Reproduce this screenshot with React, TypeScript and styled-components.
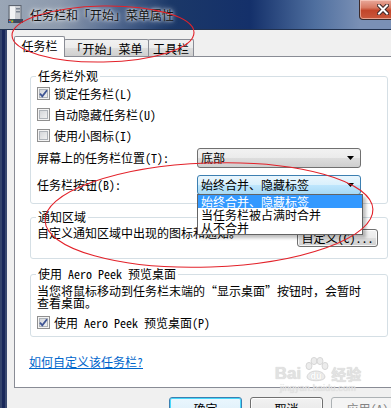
import React from "react";
import styled, { createGlobalStyle, css } from "styled-components";

const uiFont = `"Noto Sans Mono CJK SC", "Noto Sans CJK SC", "Liberation Sans", sans-serif`;

const GlobalStyle = createGlobalStyle`
  html, body {
    margin: 0;
    padding: 0;
    background: #f0f0f0;
    overflow: hidden;
  }
  body {
    font-family: ${uiFont};
    font-size: 12px;
    color: #000;
  }
  * { box-sizing: border-box; }
`;

const Window = styled.div`
  position: relative;
  width: 408px;
  height: 408px;
  display: flex;
  flex-direction: column;
`;

const TitleBar = styled.div`
  height: 30px;
  flex: none;
  display: flex;
  align-items: center;
  padding-left: 8px;
  border-bottom: 1px solid #22324f;
  background: linear-gradient(
    90deg,
    #9aa6b6 0,
    #8d9aad 60px,
    #51688f 115px,
    #1b3868 170px,
    #14306a 250px,
    #4f6f9f 315px,
    #7a90b5 360px
  );
`;

const Title = styled.span`
  margin-left: 7px;
  margin-top: -1px;
  font-size: 12px;
  color: #111;
  text-shadow: 0 0 6px #fff, 0 0 3px rgba(255, 255, 255, 0.9);
`;

const CloseButton = styled.div`
  margin-left: auto;
  align-self: flex-start;
  width: 49px;
  height: 20px;
  display: flex;
  align-items: center;
  justify-content: center;
  padding-right: 1px;
  border: 1px solid #3b2a2a;
  border-top: none;
  border-radius: 0 0 0 4px;
  background: linear-gradient(
    180deg,
    #e9a99b 0,
    #d87a63 40%,
    #c2452a 55%,
    #c9583c 100%
  );
  box-shadow: inset 0 0 0 1px rgba(255, 220, 210, 0.55);
`;

const Body = styled.div`
  flex: 1;
  display: flex;
  min-height: 0;
`;

const Frame = styled.div`
  width: 7px;
  flex: none;
  background: linear-gradient(
    90deg,
    #34446c 0 2px,
    #19285a 2px 5px,
    #3b4a70 5px 7px
  );
`;

const Content = styled.div`
  flex: 1;
  padding: 6px 8px 0 7px;
  background: #f0f0f0;
  display: flex;
  flex-direction: column;
`;

const TabStrip = styled.div`
  position: relative;
  z-index: 1;
  height: 21px;
  margin-bottom: -1px;
  display: flex;
  align-items: flex-start;
`;

const Tab = styled.div<{ $w: number; $active?: boolean }>`
  width: ${({ $w }) => $w}px;
  display: flex;
  justify-content: center;
  border: 1px solid #898c95;
  border-bottom: none;
  border-radius: 2px 2px 0 0;
  margin-right: -1px;
  ${({ $active }) =>
    $active
      ? css`
          height: 21px;
          padding-top: 2px;
          background: #fff;
          position: relative;
          z-index: 2;
        `
      : css`
          height: 17px;
          margin-top: 3px;
          padding-top: 2px;
          background: linear-gradient(180deg, #f2f2f2 0, #ebebeb 50%, #dddddd 51%, #cfcfcf 100%);
        `}
  line-height: 14px;
`;

const Panel = styled.div`
  height: 332px;
  flex: none;
  background: #fff;
  border: 1px solid #898c95;
  padding: 12px 15px 0 15px;
  display: flex;
  flex-direction: column;
`;

const Group = styled.fieldset<{ $gap?: number }>`
  margin: ${({ $gap }) => $gap ?? 0}px 0 0 0;
  min-inline-size: 0;
  border: 1px solid #d5dfe5;
  border-radius: 3px;
  padding: 0 26px 8px 6px;
`;

const Legend = styled.legend`
  padding: 0 2px;
  margin-left: -1px;
  line-height: 14px;
  font-size: 12px;
`;

const CheckRow = styled.label<{ $top?: number }>`
  height: 21px;
  margin-top: ${({ $top }) => $top ?? 0}px;
  display: flex;
  align-items: center;
  gap: 4px;
  line-height: 14px;
`;

const Box = styled.span`
  width: 13px;
  height: 13px;
  flex: none;
  border: 1px solid #8f8f8f;
  background: linear-gradient(135deg, #cdd0d4 0, #f7f7f7 100%);
  box-shadow: inset 0 0 0 1px #f4f4f4, inset 0 0 0 2px #aeb3b9;
  display: flex;
  align-items: center;
  justify-content: center;
`;

const ComboRow = styled.div<{ $top: number }>`
  height: 20px;
  margin-top: ${({ $top }) => $top}px;
  display: flex;
  align-items: center;
  justify-content: space-between;
  line-height: 14px;
`;

const Combo = styled.div<{ $focus?: boolean }>`
  position: relative;
  width: 164px;
  height: 20px;
  display: flex;
  align-items: center;
  padding: 0 6px 0 3px;
  border-radius: 3px;
  ${({ $focus }) =>
    $focus
      ? css`
          border: 1px solid #3c7fb1;
          background: linear-gradient(180deg, #eaf6fd 0, #d9f0fc 50%, #bee6fd 51%, #a7d9f5 100%);
        `
      : css`
          border: 1px solid #707070;
          background: linear-gradient(180deg, #f2f2f2 0, #ebebeb 50%, #dddddd 51%, #cfcfcf 100%);
        `}
`;

const ComboText = styled.span`
  flex: 1;
  line-height: 14px;
`;

const DropList = styled.div`
  position: absolute;
  left: -1px;
  top: 18px;
  width: 166px;
  background: #fff;
  border: 1px solid #646464;
  box-shadow: 3px 3px 3px rgba(0, 0, 0, 0.25);
  z-index: 5;
`;

const DropItem = styled.div<{ $selected?: boolean }>`
  height: 13px;
  line-height: 13px;
  padding-left: 3px;
  white-space: nowrap;
  ${({ $selected }) =>
    $selected &&
    css`
      background: #3399ff;
      color: #fff;
    `}
`;

const NotifyRow = styled.div`
  display: flex;
  align-items: flex-start;
  margin-right: -17px;
`;

const Text = styled.div<{ $top?: number }>`
  margin-top: ${({ $top }) => $top ?? 0}px;
  line-height: 14px;
  white-space: nowrap;
`;

const Paragraph = styled.div`
  margin-top: 4px;
  line-height: 12px;
  white-space: nowrap;
`;

const Button = styled.div<{ $w?: number; $h?: number; $kind?: "default" | "disabled" }>`
  width: ${({ $w }) => $w ?? 73}px;
  height: ${({ $h }) => $h ?? 23}px;
  flex: none;
  display: flex;
  align-items: center;
  justify-content: center;
  border-radius: 3px;
  line-height: 14px;
  border: 1px solid #707070;
  background: linear-gradient(180deg, #f2f2f2 0, #ebebeb 50%, #dddddd 51%, #cfcfcf 100%);
  box-shadow: inset 0 0 0 1px rgba(255, 255, 255, 0.8);
  ${({ $kind }) =>
    $kind === "default" &&
    css`
      border-color: #3c7fb1;
      box-shadow: inset 0 0 0 1px #48d8fb;
      background: linear-gradient(180deg, #eaf6fd 0, #e2f2fb 50%, #cfe9f8 51%, #c0e2f6 100%);
    `}
  ${({ $kind }) =>
    $kind === "disabled" &&
    css`
      border-color: #adb2b5;
      background: #f4f4f4;
      color: #838383;
      box-shadow: none;
    `}
`;

const Link = styled.a`
  margin-top: 18px;
  margin-left: -1px;
  line-height: 14px;
  color: #0066cc;
  text-decoration: underline;
  align-self: flex-start;
`;

const ButtonBar = styled.div`
  margin-top: 9px;
  display: flex;
  justify-content: flex-end;
  gap: 8px;
`;

const Watermark = styled.div`
  position: absolute;
  left: 272px;
  top: 357px;
  width: 92px;
  pointer-events: none;
  color: #e2e2e2;
  font-family: "Liberation Sans", sans-serif;
  display: flex;
  flex-direction: column;
  align-items: center;
`;

const MarkTop = styled.div`
  display: flex;
  align-items: flex-end;
  gap: 2px;
  font-weight: bold;
  font-size: 17px;
  line-height: 18px;
  text-shadow: 0 0 1px #c8c8c8;
`;

const MarkCn = styled.span`
  font-family: "Noto Sans CJK SC", sans-serif;
  font-size: 15px;
`;

const MarkUrl = styled.div`
  font-size: 9px;
  line-height: 10px;
  letter-spacing: 0.2px;
  color: #e4e4e4;
  text-shadow: 0 0 1px #cfcfcf;
`;

const Annotations = styled.svg`
  position: absolute;
  left: 0;
  top: 0;
  pointer-events: none;
  z-index: 20;
`;

const Check = () => (
  <svg width="9" height="9" viewBox="0 0 9 9">
    <path d="M1 4.6 L3.3 7.3 L8 1.2" fill="none" stroke="#3f5594" strokeWidth="1.8" />
  </svg>
);

const Arrow = () => (
  <svg width="7" height="4" viewBox="0 0 7 4">
    <path d="M0 0 H7 L3.5 4 Z" fill="#000" />
  </svg>
);

const AppIcon = () => (
  <svg width="15" height="19" viewBox="0 0 15 19">
    <rect x="1" y="0.5" width="12" height="16" fill="#c9ccd1" stroke="#5d6470" />
    <rect x="2" y="1.5" width="5" height="14" fill="#f2f3f5" />
    <rect x="8" y="3" width="4" height="1.5" fill="#7b8492" />
    <rect x="8" y="6" width="4" height="1.5" fill="#7b8492" />
    <rect x="0" y="14" width="15" height="4" fill="#3d4a5e" />
    <rect x="1" y="14.8" width="2" height="1.2" fill="#e2462c" />
    <rect x="3.2" y="14.8" width="2" height="1.2" fill="#5ab540" />
    <rect x="1" y="16.2" width="2" height="1.2" fill="#2f7fe0" />
    <rect x="3.2" y="16.2" width="2" height="1.2" fill="#f4c31c" />
  </svg>
);

const CloseX = () => (
  <svg width="12" height="11" viewBox="0 0 12 11">
    <path d="M2 1.5 L10 9.5 M10 1.5 L2 9.5" stroke="#3b2626" strokeWidth="4" strokeLinecap="square" />
    <path d="M2 1.5 L10 9.5 M10 1.5 L2 9.5" stroke="#fff" strokeWidth="2" strokeLinecap="square" />
  </svg>
);

const Paw = () => (
  <svg width="26" height="26" viewBox="0 0 26 26">
    <g fill="#ececec" stroke="#cfcfcf" strokeWidth="0.8">
      <ellipse cx="6" cy="9" rx="3" ry="3.6" />
      <ellipse cx="11" cy="4" rx="3" ry="3.6" />
      <ellipse cx="17" cy="4" rx="3" ry="3.6" />
      <ellipse cx="22" cy="9" rx="3" ry="3.6" />
      <path d="M4 20 C5 12, 21 12, 22 20 C22 25, 4 25, 4 20 Z" />
    </g>
    <text x="13" y="22" textAnchor="middle" fontSize="9" fontWeight="bold" fill="#fff" fontFamily="Liberation Sans, sans-serif">
      du
    </text>
  </svg>
);

const App: React.FC = () => {
  return (
    <>
      <GlobalStyle />
      <Window>
        <TitleBar>
          <AppIcon />
          <Title>任务栏和「开始」菜单属性</Title>
          <CloseButton>
            <CloseX />
          </CloseButton>
        </TitleBar>
        <Body>
          <Frame />
          <Content>
            <TabStrip>
              <Tab $w={51} $active>
                任务栏
              </Tab>
              <Tab $w={85}>「开始」菜单</Tab>
              <Tab $w={46}>工具栏</Tab>
            </TabStrip>
            <Panel>
              <Group>
                <Legend>任务栏外观</Legend>
                <CheckRow>
                  <Box>
                    <Check />
                  </Box>
                  锁定任务栏(L)
                </CheckRow>
                <CheckRow>
                  <Box />
                  自动隐藏任务栏(U)
                </CheckRow>
                <CheckRow>
                  <Box />
                  使用小图标(I)
                </CheckRow>
                <ComboRow $top={2}>
                  <span>屏幕上的任务栏位置(T):</span>
                  <Combo>
                    <ComboText>底部</ComboText>
                    <Arrow />
                  </Combo>
                </ComboRow>
                <ComboRow $top={7}>
                  <span>任务栏按钮(B):</span>
                  <Combo $focus>
                    <ComboText>始终合并、隐藏标签</ComboText>
                    <Arrow />
                    <DropList>
                      <DropItem $selected>始终合并、隐藏标签</DropItem>
                      <DropItem>当任务栏被占满时合并</DropItem>
                      <DropItem>从不合并</DropItem>
                    </DropList>
                  </Combo>
                </ComboRow>
              </Group>

              <Group $gap={6} style={{ paddingBottom: 11 }}>
                <Legend>通知区域</Legend>
                <NotifyRow>
                  <Text $top={2}>自定义通知区域中出现的图标和通知。</Text>
                  <Button $w={81} $h={18} style={{ marginLeft: "auto", marginTop: 5 }}>
                    自定义(C)...
                  </Button>
                </NotifyRow>
              </Group>

              <Group $gap={8} style={{ paddingBottom: 3 }}>
                <Legend>使用 Aero Peek 预览桌面</Legend>
                <Paragraph>
                  当您将鼠标移动到任务栏末端的“显示桌面”按钮时，会暂时
                  <br />
                  查看桌面。
                </Paragraph>
                <CheckRow $top={3}>
                  <Box>
                    <Check />
                  </Box>
                  使用 Aero Peek 预览桌面(P)
                </CheckRow>
              </Group>

              <Link>如何自定义该任务栏?</Link>
            </Panel>
            <ButtonBar>
              <Button $kind="default">确定</Button>
              <Button>取消</Button>
              <Button $kind="disabled">应用(A)</Button>
            </ButtonBar>
          </Content>
        </Body>

        <Watermark>
          <MarkTop>
            <span>Bai</span>
            <Paw />
            <MarkCn>经验</MarkCn>
          </MarkTop>
          <MarkUrl>jingyan.baidu.com</MarkUrl>
        </Watermark>

        <Annotations width="391" height="408" viewBox="0 0 391 408">
          <ellipse cx="103" cy="34" rx="91" ry="28" transform="rotate(-1 103 34)" fill="none" stroke="#e3222a" strokeWidth="1.1" />
          <ellipse cx="209" cy="215" rx="164" ry="52" transform="rotate(-2 209 215)" fill="none" stroke="#e3222a" strokeWidth="1.1" />
        </Annotations>
      </Window>
    </>
  );
};

export default App;
